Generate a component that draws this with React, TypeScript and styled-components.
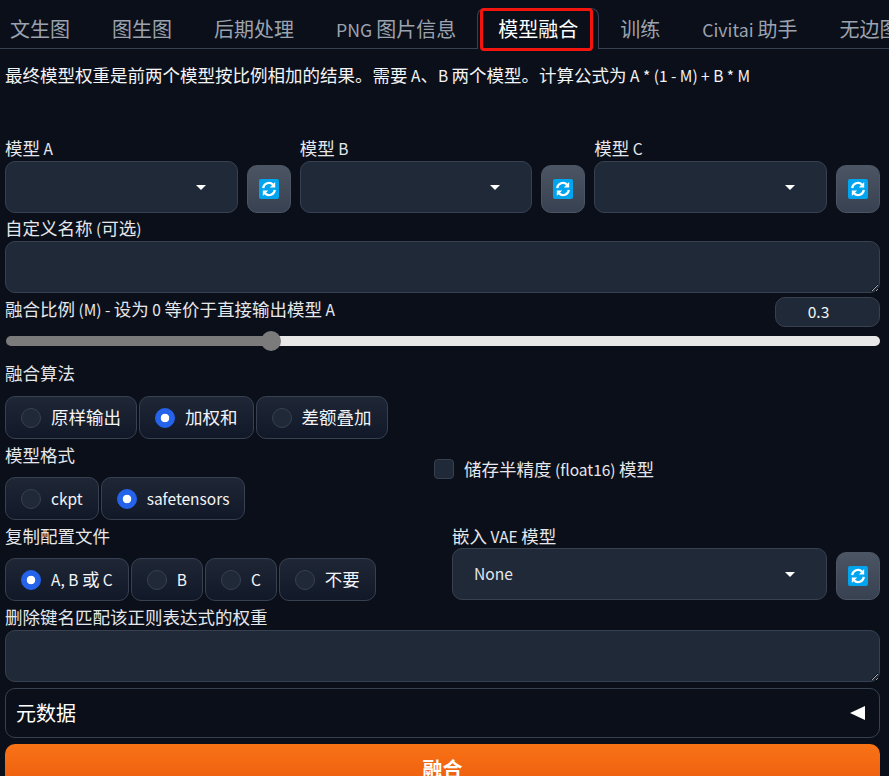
import styled, { createGlobalStyle } from 'styled-components'

const GlobalStyle = createGlobalStyle`
  html, body {
    margin: 0;
    height: 100%;
    overflow: hidden;
    background: #0b0f19;
  }

  * {
    box-sizing: border-box;
  }

  body {
    font-family: 'Noto Sans CJK SC', 'Noto Sans', sans-serif;
    color: #e5e7eb;
  }
`

// latin letters sit smaller than the CJK glyphs next to them
const Latin = styled.span`
  font-size: 0.886em;
`

const TabBar = styled.div`
  display: flex;
  height: 49px;
  margin-left: -11px;
  border-bottom: 1px solid #374151;
  white-space: nowrap;
  overflow-x: clip;
  overflow-y: visible;
`

const Tab = styled.button<{ $active?: boolean }>`
  position: relative;
  flex: none;
  height: ${p => (p.$active ? '41px' : '40px')};
  margin: 8px 0 0;
  padding: 0 20px;
  border: 1px solid ${p => (p.$active ? '#374151' : 'transparent')};
  border-bottom: none;
  border-radius: 8px 8px 0 0;
  background: #0b0f19;
  font: 20px/38px 'Noto Sans CJK SC', sans-serif;
  color: ${p => (p.$active ? '#fff' : '#9ca3af')};
`

const Highlight = styled.span`
  position: absolute;
  left: 2px;
  top: -1px;
  width: 113px;
  height: 43px;
  border: 3px solid #f5150f;
  border-radius: 4px;
`

const Page = styled.main`
  display: flex;
  flex-direction: column;
  padding: 0 9px 0 5px;
`

const Description = styled.p`
  height: 87px;
  margin: 0;
  padding-top: 14px;
  font-size: 17.5px;
  line-height: 24px;
  color: #f3f4f6;
`

const Label = styled.label<{ $h?: number }>`
  display: block;
  height: ${p => p.$h ?? 25}px;
  font-size: 17.5px;
  line-height: 23px;
  color: #e5e7eb;
`

const ModelRow = styled.div`
  display: flex;
  gap: 9px;
  margin-bottom: 3px;
`

const Field = styled.div`
  flex: 1;
  min-width: 0;
`

const FieldRow = styled.div`
  display: flex;
  align-items: flex-end;
  gap: 9px;
`

const Select = styled.div`
  display: flex;
  flex: 1;
  align-items: center;
  justify-content: space-between;
  height: 52px;
  padding: 0 31px 0 21px;
  border: 1px solid #374151;
  border-radius: 10px;
  background: #1f2937;
  font-size: 15.6px;
  color: #e5e7eb;
`

const Caret = styled.span`
  width: 0;
  height: 0;
  margin-left: auto;
  border-left: 5px solid transparent;
  border-right: 5px solid transparent;
  border-top: 5px solid #fff;
`

// text in a centred row sits a pixel above the middle
const RowText = styled.span`
  margin-bottom: 2px;
`

const RefreshButton = styled.button`
  display: flex;
  flex: none;
  align-items: center;
  justify-content: center;
  width: 44px;
  height: 48px;
  padding: 0;
  border: 1px solid #4b5563;
  border-radius: 10px;
  background: linear-gradient(to bottom, #4b5563, #374151);
`

const Area = styled.textarea`
  display: block;
  width: 100%;
  height: 52px;
  padding: 10px 12px;
  border: 1px solid #374151;
  border-radius: 10px;
  background: #1f2937;
  color: #e5e7eb;
  color-scheme: dark;
  outline: none;
`

const SliderHead = styled.div`
  display: flex;
  align-items: flex-start;
  justify-content: space-between;
  margin-top: 4px;
`

const NumberBox = styled.input`
  width: 105px;
  height: 30px;
  padding: 0 18px 2px 0;
  border: 1px solid #374151;
  border-radius: 10px;
  background: #1f2937;
  font: 15.6px 'Noto Sans CJK SC', sans-serif;
  color: #f3f4f6;
  text-align: center;
  outline: none;
`

const Range = styled.input`
  appearance: none;
  display: block;
  width: 874px;
  height: 10px;
  margin: 9px 0 15px 1px;
  border-radius: 5px;
  background: linear-gradient(to right, #7b7b7b 30%, #e8e8e8 30%);

  &::-webkit-slider-thumb {
    appearance: none;
    width: 20px;
    height: 20px;
    border-radius: 50%;
    background: #7b7b7b;
    transform: translateX(-1px);
  }
`

const RadioGroup = styled.div`
  display: flex;
  gap: 2px;
  margin: 9px 0 4px;
`

const RadioItem = styled.label`
  display: flex;
  align-items: center;
  gap: 10px;
  height: 43px;
  padding: 0 15px;
  border: 1px solid #374151;
  border-radius: 10px;
  background: linear-gradient(to bottom, #1f2737, #111827);
  font-size: 17.5px;
  color: #f3f4f6;
`

const RadioDot = styled.span<{ $on?: boolean }>`
  flex: none;
  width: 20px;
  height: 20px;
  border: 1px solid ${p => (p.$on ? '#2563eb' : '#374151')};
  border-radius: 50%;
  background: ${p =>
    p.$on ? 'radial-gradient(circle, #fff 0 4px, #2563eb 4.6px)' : '#1f2937'};
`

const SplitRow = styled.div<{ $left: number }>`
  display: grid;
  grid-template-columns: ${p => p.$left}px 1fr;
`

const CheckCell = styled.label`
  display: flex;
  align-items: center;
  gap: 10px;
  height: 20px;
  margin-top: 16px;
  font-size: 17.5px;
  color: #e5e7eb;
`

const CheckBox = styled.span`
  width: 20px;
  height: 20px;
  border: 1px solid #374151;
  border-radius: 4px;
  background: #1f2937;
`

const Accordion = styled.div`
  display: flex;
  align-items: center;
  justify-content: space-between;
  height: 50px;
  margin-top: 6px;
  padding: 0 14px 0 10px;
  border: 1px solid #374151;
  border-radius: 10px;
  font-size: 20px;
  color: #fff;
`

const AccordionArrow = styled.span`
  width: 0;
  height: 0;
  border-top: 7px solid transparent;
  border-bottom: 7px solid transparent;
  border-right: 15px solid #fff;
`

const MergeButton = styled.button`
  flex: none;
  height: 50px;
  margin-top: 6px;
  border: none;
  border-radius: 10px;
  background: linear-gradient(to bottom, #f97316, #ea580c);
  font: bold 20px/48px 'Noto Sans CJK SC', sans-serif;
  color: #fff;
`

const RefreshIcon = () => (
  <svg width='20' height='20' viewBox='0 0 20 20'>
    <rect width='20' height='20' rx='2' fill='#00a4ef' />
    <path
      d='M4.2 9.2A5.8 5.8 0 0 1 14 5.6'
      fill='none'
      stroke='#fff'
      strokeWidth='2.2'
    />
    <path d='M16.2 3v5.4h-5.4z' fill='#fff' />
    <path
      d='M15.8 10.8A5.8 5.8 0 0 1 6 14.4'
      fill='none'
      stroke='#fff'
      strokeWidth='2.2'
    />
    <path d='M3.8 17v-5.4h5.4z' fill='#fff' />
  </svg>
)

const Mixed = ({ text }: { text: string }) => (
  <>
    {text.split(/([\x20-\x7e]+)/).map((part, i) =>
      /[\x20-\x7e]/.test(part) ? <Latin key={i}>{part}</Latin> : part
    )}
  </>
)

const tabs = ['文生图', '图生图', '后期处理', 'PNG 图片信息', '模型融合', '训练', 'Civitai 助手', '无边图像浏览']

const models = ['模型 A', '模型 B', '模型 C']

const Radios = ({ items, selected }: { items: string[]; selected: string }) => (
  <RadioGroup>
    {items.map(item => (
      <RadioItem key={item}>
        <RadioDot $on={item === selected} />
        <RowText>
          <Mixed text={item} />
        </RowText>
      </RadioItem>
    ))}
  </RadioGroup>
)

const App = () => {
  return (
    <>
      <GlobalStyle />
      <TabBar>
        {tabs.map(tab => (
          <Tab key={tab} $active={tab === '模型融合'}>
            <Mixed text={tab} />
            {tab === '模型融合' && <Highlight />}
          </Tab>
        ))}
      </TabBar>
      <Page>
        <Description>
          <Mixed text='最终模型权重是前两个模型按比例相加的结果。需要 A、B 两个模型。计算公式为 A * (1 - M) + B * M' />
        </Description>
        <ModelRow>
          {models.map(model => (
            <Field key={model}>
              <Label>
                <Mixed text={model} />
              </Label>
              <FieldRow>
                <Select>
                  <Caret />
                </Select>
                <RefreshButton>
                  <RefreshIcon />
                </RefreshButton>
              </FieldRow>
            </Field>
          ))}
        </ModelRow>
        <Label>
          <Mixed text='自定义名称 (可选)' />
        </Label>
        <Area />
        <SliderHead>
          <Label>
            <Mixed text='融合比例 (M) - 设为 0 等价于直接输出模型 A' />
          </Label>
          <NumberBox defaultValue='0.3' />
        </SliderHead>
        <Range type='range' min={0} max={1} step={0.05} defaultValue={0.3} />
        <Label $h={26}>融合算法</Label>
        <Radios items={['原样输出', '加权和', '差额叠加']} selected='加权和' />
        <SplitRow $left={429}>
          <div>
            <Label>模型格式</Label>
            <Radios items={['ckpt', 'safetensors']} selected='safetensors' />
          </div>
          <CheckCell>
            <CheckBox />
            <RowText>
              <Mixed text='储存半精度 (float16) 模型' />
            </RowText>
          </CheckCell>
        </SplitRow>
        <SplitRow $left={447}>
          <div>
            <Label>复制配置文件</Label>
            <Radios items={['A, B 或 C', 'B', 'C', '不要']} selected='A, B 或 C' />
          </div>
          <Field>
            <Label $h={24}>
              <Mixed text='嵌入 VAE 模型' />
            </Label>
            <FieldRow>
              <Select>
                <RowText>None</RowText>
                <Caret />
              </Select>
              <RefreshButton>
                <RefreshIcon />
              </RefreshButton>
            </FieldRow>
          </Field>
        </SplitRow>
        <Label>删除键名匹配该正则表达式的权重</Label>
        <Area />
        <Accordion>
          <RowText>元数据</RowText>
          <AccordionArrow />
        </Accordion>
        <MergeButton>融合</MergeButton>
      </Page>
    </>
  )
}

export default App
